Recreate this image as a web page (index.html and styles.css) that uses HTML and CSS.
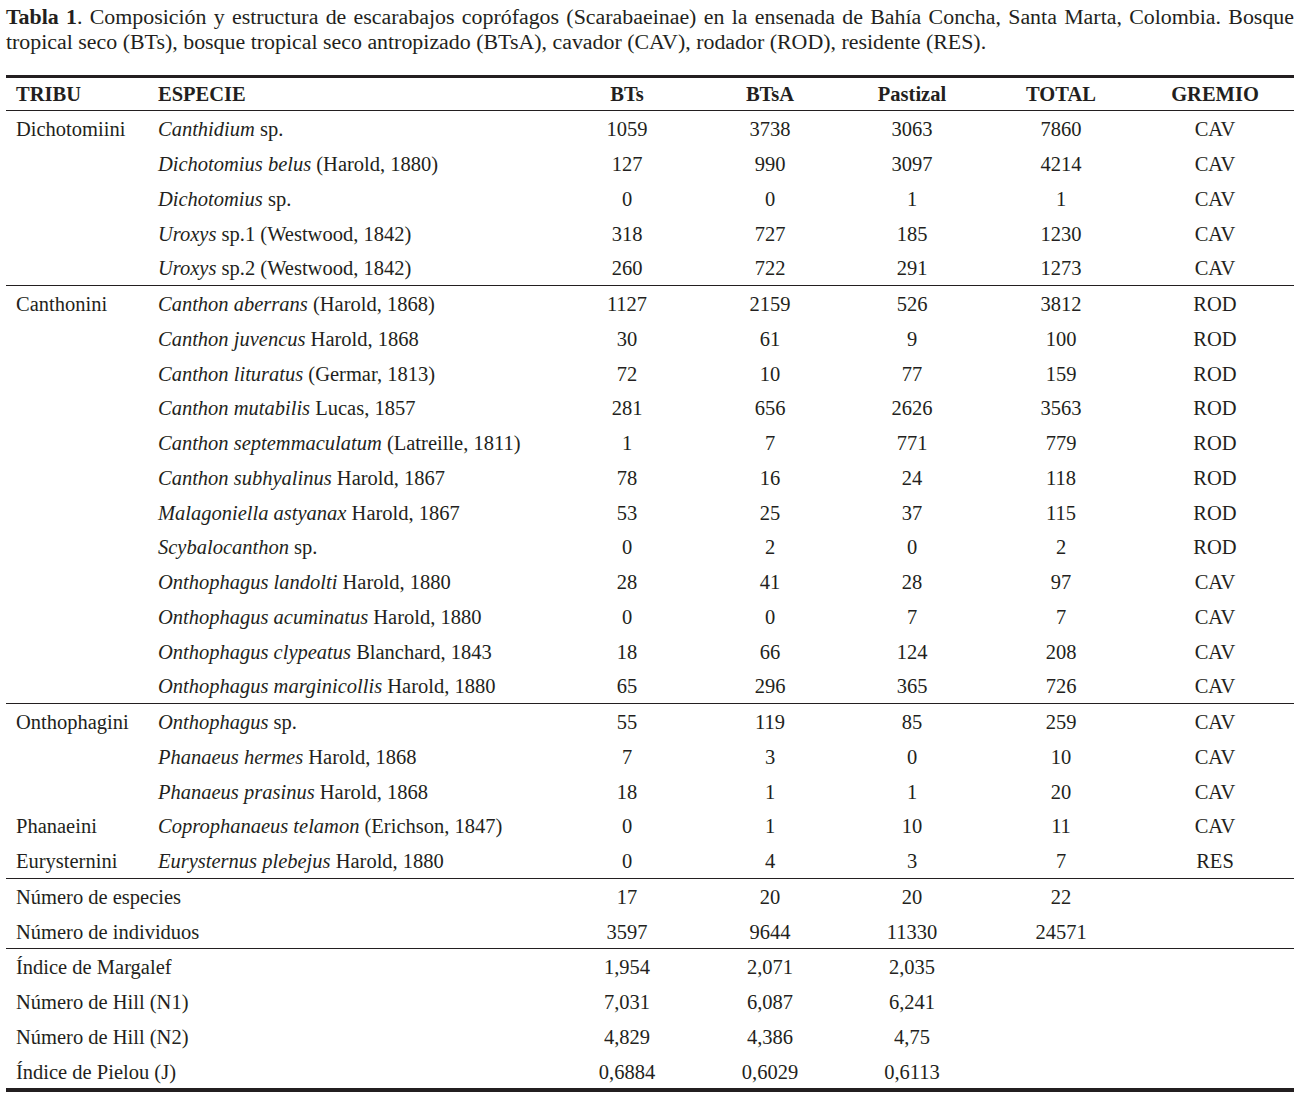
FILE: index.html
```html
<!DOCTYPE html>
<html lang="es">
<head>
<meta charset="utf-8">
<title>Tabla 1</title>
<link rel="stylesheet" href="styles.css">
</head>
<body>
<div class="page">
<p class="caption"><b>Tabla 1</b>. Composición y estructura de escarabajos coprófagos (Scarabaeinae) en la ensenada de Bahía Concha, Santa Marta, Colombia. Bosque tropical seco (BTs), bosque tropical seco antropizado (BTsA), cavador (CAV), rodador (ROD), residente (RES).</p>
<table class="data">
<colgroup>
<col class="c-tribu"><col class="c-esp"><col class="c-n1"><col class="c-n2"><col class="c-n3"><col class="c-n4"><col class="c-g">
</colgroup>
<thead>
<tr><th class="t">TRIBU</th><th class="s">ESPECIE</th><th>BTs</th><th>BTsA</th><th>Pastizal</th><th>TOTAL</th><th class="g">GREMIO</th></tr>
</thead>
<tbody>
<tr><td class="t">Dichotomiini</td><td class="s"><i>Canthidium</i> sp.</td><td>1059</td><td>3738</td><td>3063</td><td>7860</td><td class="g">CAV</td></tr>
<tr><td class="t"></td><td class="s"><i>Dichotomius belus</i> (Harold, 1880)</td><td>127</td><td>990</td><td>3097</td><td>4214</td><td class="g">CAV</td></tr>
<tr><td class="t"></td><td class="s"><i>Dichotomius</i> sp.</td><td>0</td><td>0</td><td>1</td><td>1</td><td class="g">CAV</td></tr>
<tr><td class="t"></td><td class="s"><i>Uroxys</i> sp.1 (Westwood, 1842)</td><td>318</td><td>727</td><td>185</td><td>1230</td><td class="g">CAV</td></tr>
<tr><td class="t"></td><td class="s"><i>Uroxys</i> sp.2 (Westwood, 1842)</td><td>260</td><td>722</td><td>291</td><td>1273</td><td class="g">CAV</td></tr>
<tr class="sep"><td class="t">Canthonini</td><td class="s"><i>Canthon aberrans</i> (Harold, 1868)</td><td>1127</td><td>2159</td><td>526</td><td>3812</td><td class="g">ROD</td></tr>
<tr><td class="t"></td><td class="s"><i>Canthon juvencus</i> Harold, 1868</td><td>30</td><td>61</td><td>9</td><td>100</td><td class="g">ROD</td></tr>
<tr><td class="t"></td><td class="s"><i>Canthon lituratus</i> (Germar, 1813)</td><td>72</td><td>10</td><td>77</td><td>159</td><td class="g">ROD</td></tr>
<tr><td class="t"></td><td class="s"><i>Canthon mutabilis</i> Lucas, 1857</td><td>281</td><td>656</td><td>2626</td><td>3563</td><td class="g">ROD</td></tr>
<tr><td class="t"></td><td class="s"><i>Canthon septemmaculatum</i> (Latreille, 1811)</td><td>1</td><td>7</td><td>771</td><td>779</td><td class="g">ROD</td></tr>
<tr><td class="t"></td><td class="s"><i>Canthon subhyalinus</i> Harold, 1867</td><td>78</td><td>16</td><td>24</td><td>118</td><td class="g">ROD</td></tr>
<tr><td class="t"></td><td class="s"><i>Malagoniella astyanax</i> Harold, 1867</td><td>53</td><td>25</td><td>37</td><td>115</td><td class="g">ROD</td></tr>
<tr><td class="t"></td><td class="s"><i>Scybalocanthon</i> sp.</td><td>0</td><td>2</td><td>0</td><td>2</td><td class="g">ROD</td></tr>
<tr><td class="t"></td><td class="s"><i>Onthophagus landolti</i> Harold, 1880</td><td>28</td><td>41</td><td>28</td><td>97</td><td class="g">CAV</td></tr>
<tr><td class="t"></td><td class="s"><i>Onthophagus acuminatus</i> Harold, 1880</td><td>0</td><td>0</td><td>7</td><td>7</td><td class="g">CAV</td></tr>
<tr><td class="t"></td><td class="s"><i>Onthophagus clypeatus</i> Blanchard, 1843</td><td>18</td><td>66</td><td>124</td><td>208</td><td class="g">CAV</td></tr>
<tr><td class="t"></td><td class="s"><i>Onthophagus marginicollis</i> Harold, 1880</td><td>65</td><td>296</td><td>365</td><td>726</td><td class="g">CAV</td></tr>
<tr class="sep"><td class="t">Onthophagini</td><td class="s"><i>Onthophagus</i> sp.</td><td>55</td><td>119</td><td>85</td><td>259</td><td class="g">CAV</td></tr>
<tr><td class="t"></td><td class="s"><i>Phanaeus hermes</i> Harold, 1868</td><td>7</td><td>3</td><td>0</td><td>10</td><td class="g">CAV</td></tr>
<tr><td class="t"></td><td class="s"><i>Phanaeus prasinus</i> Harold, 1868</td><td>18</td><td>1</td><td>1</td><td>20</td><td class="g">CAV</td></tr>
<tr><td class="t">Phanaeini</td><td class="s"><i>Coprophanaeus telamon</i> (Erichson, 1847)</td><td>0</td><td>1</td><td>10</td><td>11</td><td class="g">CAV</td></tr>
<tr><td class="t">Eurysternini</td><td class="s"><i>Eurysternus plebejus</i> Harold, 1880</td><td>0</td><td>4</td><td>3</td><td>7</td><td class="g">RES</td></tr>
<tr class="sep"><td class="t" colspan="2">Número de especies</td><td>17</td><td>20</td><td>20</td><td>22</td><td class="g"></td></tr>
<tr><td class="t" colspan="2">Número de individuos</td><td>3597</td><td>9644</td><td>11330</td><td>24571</td><td class="g"></td></tr>
<tr class="sep"><td class="t" colspan="2">Índice de Margalef</td><td>1,954</td><td>2,071</td><td>2,035</td><td></td><td class="g"></td></tr>
<tr><td class="t" colspan="2">Número de Hill (N1)</td><td>7,031</td><td>6,087</td><td>6,241</td><td></td><td class="g"></td></tr>
<tr><td class="t" colspan="2">Número de Hill (N2)</td><td>4,829</td><td>4,386</td><td>4,75</td><td></td><td class="g"></td></tr>
<tr class="last"><td class="t" colspan="2">Índice de Pielou (J)</td><td>0,6884</td><td>0,6029</td><td>0,6113</td><td></td><td class="g"></td></tr>
</tbody>
</table>
</div>
</body>
</html>
```
FILE: styles.css
```css
html, body {
  margin: 0;
  padding: 0;
  background: #ffffff;
}

body {
  font-family: "Liberation Serif", "Times New Roman", serif;
  color: #231f20;
  font-size: 20.5px;
}

.page {
  width: 1288px;
  padding: 4px 8px 0 6px;
}

.caption {
  margin: 0 0 21px 0;
  font-size: 21.9px;
  line-height: 25px;
  text-align: justify;
}

.data {
  width: 1288px;
  border-collapse: collapse;
  table-layout: fixed;
}

.c-tribu { width: 146px; }
.c-esp { width: 404px; }
.c-n1 { width: 142px; }
.c-n2 { width: 144px; }
.c-n3 { width: 140px; }
.c-n4 { width: 158px; }
.c-g { width: 154px; }

.data th,
.data td {
  padding: 0;
  text-align: center;
  white-space: nowrap;
  line-height: 24px;
}

.data thead th {
  font-weight: bold;
  height: 32px;
  border-top: 3px solid #231f20;
  border-bottom: 1px solid #231f20;
}

.data td {
  padding-top: 2px;
  height: 32.75px;
}

.data .t {
  text-align: left;
  padding-left: 10px;
}

.data .s {
  text-align: left;
  padding-left: 6px;
}

.data .g {
  padding-right: 4px;
}

.data tr.sep td {
  border-top: 1px solid #231f20;
}

.data tr.last td {
  border-bottom: 4px solid #231f20;
}
```
